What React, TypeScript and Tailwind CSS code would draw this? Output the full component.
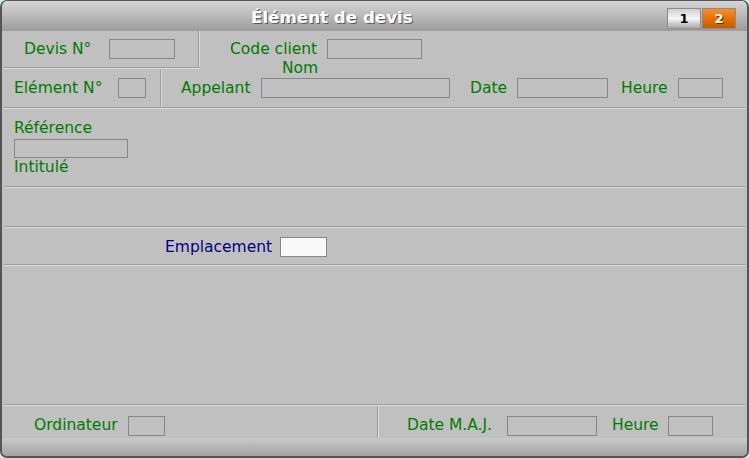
import React from "react";

// petit champ de saisie vide, bordure grise
const Box = ({ className = "" }: { className?: string }) => (
  <div className={`h-[20px] shrink-0 border border-[#868686] ${className}`} />
);

const HLine = () => (
  <div className="h-[2px] shrink-0 border-t border-b border-t-[#9c9c9c] border-b-[#dcdcdc]" />
);

const VLine = () => (
  <div className="w-[2px] shrink-0 self-stretch border-l border-r border-l-[#9c9c9c] border-r-[#dcdcdc]" />
);

const Label = ({
  children,
  className = "",
}: {
  children: React.ReactNode;
  className?: string;
}) => (
  <span className={`shrink-0 whitespace-nowrap leading-[18px] text-[#007a00] ${className}`}>
    {children}
  </span>
);

export default function App() {
  return (
    <div className="h-[458px] w-[749px] bg-[#d5ebe7] font-['DejaVu_Sans',sans-serif] text-[15.5px]">
      <div className="flex h-full flex-col overflow-hidden rounded-[7px] border-2 border-t border-[#555555] bg-[#c0c0c0]">
        {/* barre de titre */}
        <div className="flex h-[30px] shrink-0 items-start bg-linear-to-b from-[#d6d6d6] to-[#9c9c9c] pt-[7px]">
          <span className="ml-[249px] text-[16.7px] font-bold leading-[18px] text-white [text-shadow:1px_1px_0_#5a5a5a]">
            Élément de devis
          </span>
          <div className="ml-auto mr-[11px] flex gap-[1px]">
            <div className="flex h-[21px] w-[34px] items-center justify-center border border-[#8a8a8a] bg-linear-to-b from-[#cfcfcf] via-[#f6f6f6] to-[#aaaaaa] text-[13px] font-bold text-black">
              1
            </div>
            <div className="flex h-[21px] w-[34px] items-center justify-center border border-[#8a8a8a] bg-linear-to-b from-[#f39030] via-[#e87000] to-[#c85a00] text-[13px] font-bold text-white [text-shadow:1px_1px_0_#553300]">
              2
            </div>
          </div>
        </div>

        {/* corps */}
        <div className="flex flex-1 flex-col px-[2px]">
          {/* ligne 1 */}
          <div className="flex h-[38px] shrink-0">
            <div className="flex w-[196px] flex-col">
              <div className="flex h-[36px]">
                <div className="flex flex-1 items-center pl-[20px]">
                  <Label className="w-[85px]">Devis N°</Label>
                  <Box className="w-[66px]" />
                </div>
                <VLine />
              </div>
              <HLine />
            </div>
            <div className="flex flex-1 flex-col pl-[30px] pt-[8px]">
              <div className="flex h-[20px] items-center">
                <Label className="w-[97px]">Code client</Label>
                <Box className="w-[95px]" />
              </div>
              <span className="ml-[52px] mt-[1px] leading-[17px] text-[#007a00]">Nom</span>
            </div>
          </div>

          {/* ligne 2 */}
          <div className="flex h-[38px] shrink-0">
            <div className="flex w-[156px] items-center pl-[10px] pb-[1px]">
              <Label className="w-[104px]">Elément N°</Label>
              <Box className="w-[28px]" />
            </div>
            <VLine />
            <div className="flex flex-1 items-center pl-[19px] pb-[1px]">
              <Label className="w-[80px]">Appelant</Label>
              <Box className="w-[189px]" />
              <Label className="ml-[20px] w-[47px]">Date</Label>
              <Box className="w-[91px]" />
              <Label className="ml-[13px] w-[57px]">Heure</Label>
              <Box className="w-[45px]" />
            </div>
          </div>
          <HLine />

          {/* référence */}
          <div className="flex h-[77px] shrink-0 flex-col items-start pl-[10px] pt-[10px]">
            <span className="leading-[18px] text-[#007a00]">Référence</span>
            <div className="mt-[2px] h-[19px] w-[114px] border border-[#868686]" />
            <span className="leading-[18px] text-[#007a00]">Intitulé</span>
          </div>
          <HLine />

          <div className="h-[38px] shrink-0" />
          <HLine />

          {/* emplacement */}
          <div className="flex h-[36px] shrink-0 items-center pl-[161px] pt-[2px]">
            <span className="w-[115px] shrink-0 leading-[18px] text-[#000080]">Emplacement</span>
            <div className="h-[20px] w-[47px] border border-[#868686] bg-[#f8f8f8]" />
          </div>
          <HLine />

          <div className="flex-1" />
          <HLine />

          {/* pied */}
          <div className="flex h-[32px] shrink-0">
            <div className="flex w-[373px] items-start pl-[30px] pt-[10px]">
              <Label className="w-[94px] leading-[16px]">Ordinateur</Label>
              <Box className="w-[37px]" />
            </div>
            <VLine />
            <div className="flex flex-1 items-start pl-[28px] pt-[10px]">
              <Label className="w-[100px] leading-[16px]">Date M.A.J.</Label>
              <Box className="w-[90px]" />
              <Label className="ml-[15px] w-[56px] leading-[16px]">Heure</Label>
              <Box className="w-[45px]" />
            </div>
          </div>
        </div>

        {/* barre du bas */}
        <div className="h-[18px] shrink-0 bg-linear-to-b from-[#cacaca] to-[#a2a2a2]" />
      </div>
    </div>
  );
}
